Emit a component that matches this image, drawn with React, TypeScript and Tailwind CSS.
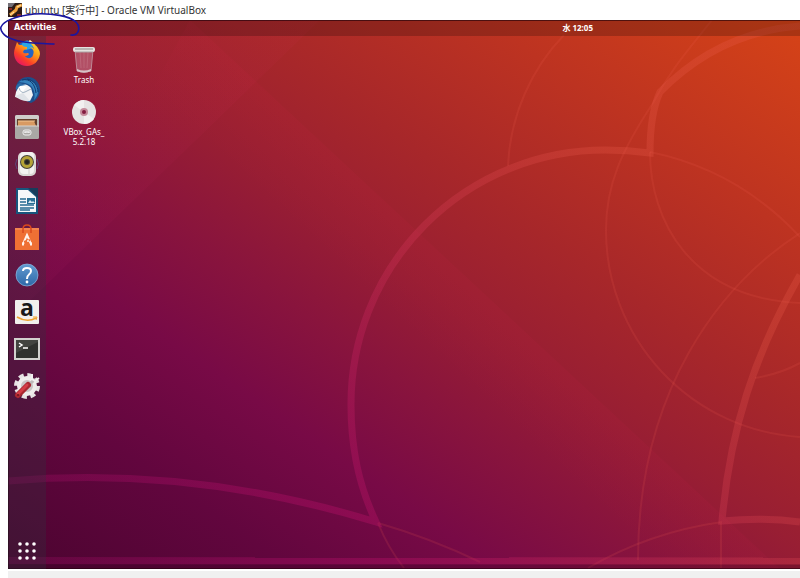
import type { ReactNode } from "react";

function Wallpaper() {
  return (
    <svg
      className="absolute inset-0 h-full w-full"
      viewBox="8 20 792 549"
      preserveAspectRatio="none"
      fill="none"
      aria-hidden="true"
    >
      <defs>
        <linearGradient id="sky" x1="0" y1="1" x2="1" y2="0">
          <stop offset="0" stopColor="#4b0430" />
          <stop offset="0.18" stopColor="#62063e" />
          <stop offset="0.31" stopColor="#780a46" />
          <stop offset="0.42" stopColor="#89143d" />
          <stop offset="0.52" stopColor="#981e33" />
          <stop offset="0.64" stopColor="#a7272a" />
          <stop offset="0.8" stopColor="#bd3321" />
          <stop offset="1" stopColor="#d64317" />
        </linearGradient>
        <linearGradient id="ribbon" gradientUnits="userSpaceOnUse" x1="8" y1="569" x2="560" y2="100">
          <stop offset="0" stopColor="#c0107c" stopOpacity="0.18" />
          <stop offset="0.4" stopColor="#c0106c" stopOpacity="0.34" />
          <stop offset="1" stopColor="#e85848" stopOpacity="0.28" />
        </linearGradient>
        <linearGradient id="facetA" gradientUnits="userSpaceOnUse" x1="200" y1="155" x2="90" y2="30">
          <stop offset="0" stopColor="#ff3080" stopOpacity="0.04" />
          <stop offset="1" stopColor="#ff3080" stopOpacity="0.03" />
        </linearGradient>
        <linearGradient id="facetB" gradientUnits="userSpaceOnUse" x1="460" y1="260" x2="400" y2="325">
          <stop offset="0" stopColor="#ff2060" stopOpacity="0.05" />
          <stop offset="1" stopColor="#ff2060" stopOpacity="0" />
        </linearGradient>
      </defs>
      <rect x="8" y="20" width="792" height="549" fill="url(#sky)" />
      <path d="M8 20H320L46 285L8 322Z" fill="url(#facetA)" />
      <path d="M190 20L780 569H600L130 130Z" fill="url(#facetB)" />

      <g stroke="#f06050" strokeOpacity="0.15" strokeWidth="2">
        <path d="M564 35C532 68 510 115 508 166" />
        <path d="M712 20C690 48 670 70 653 103C622 150 606 184 606 230A207 207 0 0 0 800 437" />
        <path d="M650 152C650 220 690 298 800 303" />
        <path d="M650 152Q738 170 800 237" />
        <path d="M800 233C720 285 638 390 638 560" />
        <path d="M755 378Q780 374 800 363" />
        <path d="M722 522Q650 532 588 568M721 522V568" />
        <path d="M378 523Q388 548 404 568M378 523Q430 538 480 562" />
      </g>

      <g stroke="url(#ribbon)" strokeWidth="7">
        <path d="M8 481Q190 465 376 522C359 486 351 450 351 405A254 254 0 0 1 605 150Q628 150 650 153C650 125 653 107 660 92Q719 32 800 26" />
        <path d="M800 275C754 355 730 430 722 521Q765 517 800 522" />
        <path d="M8 560.5L800 561" />
      </g>
      <path d="M8 566.5H800" stroke="#30001c" strokeOpacity="0.25" strokeWidth="4" />
      <path d="M8.5 20V569M8 568.5H800M8 20.5H800" stroke="#20000c" strokeOpacity="0.6" />
    </svg>
  );
}

function Icon({ children }: { children: ReactNode }) {
  return (
    <svg className="h-[26px] w-[26px] overflow-visible" viewBox="0 0 26 26" fill="none" aria-hidden="true">
      {children}
    </svg>
  );
}

const Firefox = () => (
  <Icon>
    <defs>
      <linearGradient id="fox" x1="22" y1="2" x2="6" y2="24" gradientUnits="userSpaceOnUse">
        <stop stopColor="#ffe02e" />
        <stop offset="0.4" stopColor="#ff9a16" />
        <stop offset="0.75" stopColor="#fb3e29" />
        <stop offset="1" stopColor="#e91a5c" />
      </linearGradient>
    </defs>
    <circle cx="13" cy="12" r="11" fill="#2464c4" />
    <path d="M9 2Q13-1 17 2L19 8 12 10 7 6Z" fill="#28a7e8" />
    <path
      d="M15 0C18 1 20 3 21 5C24 7 26 11 26 14C25 21 20 26 13 26C5 26 0 20 0 13C0 9 2 6 3 2L5 5L8 5C9 6 10 7 13 7L13 9L10 10L9 12C10 14 12 13 14 13C16 14 14 16 11 16C13 19 18 19 19 15C21 10 18 9 16 7C18 7 19 8 20 9C19 5 16 4 15 0Z"
      fill="url(#fox)"
    />
    <path d="M16 0L14 3H19Z" fill="#fff4c0" />
  </Icon>
);

const Thunderbird = () => (
  <Icon>
    <path d="M2 10C3 3 9 0 14 0C21 0 26 6 26 13C26 19 22 24 17 26L3 20Z" fill="#1c4f8c" />
    <path d="M5 5C10 1 19 2 23 9C25 14 24 19 20 23C22 16 19 9 14 7C10 5 7 6 5 5Z" fill="#3583bd" />
    <path d="M8 3C16 1 21 7 22 16M13 2C20 3 24 9 24 15" stroke="#12386c" />
    <path d="M5 9C8 6 14 7 17 11L19 18L16 24L1 20L2 15Z" fill="#f1f2f4" />
    <path d="M1 19L9 16L16 24Q7 25 1 19Z" fill="#dfe3e8" />
    <path d="M4 12Q5 7 10 8L13 11Q10 11 9 16L6 16Z" fill="#fff" />
    <path d="M5 11Q7 17 11 15L17 12" stroke="#9fb0c0" />
    <path d="M2 13C1 10 3 7 6 6L12 8L6 9Z" fill="#2a6aa7" />
  </Icon>
);

const Files = () => (
  <Icon>
    <rect x="1" y="1" width="24" height="24" rx="2" fill="#b9b7b4" />
    <rect x="1" y="1" width="24" height="5" rx="2" fill="#cfcdca" />
    <rect x="3" y="5" width="20" height="7" fill="#63402c" />
    <path d="M4 7H20L22 12H4Z" fill="#d89a62" />
    <path d="M4 7H21" stroke="#f2c592" />
    <rect x="1" y="12" width="24" height="13" rx="2" fill="#aaa8a5" />
    <path d="M1 12H25" stroke="#d6d4d1" />
    <rect x="9" y="16" width="8" height="5" rx="2" stroke="#eee" />
    <path d="M11 19V18H15V19" stroke="#eee" strokeWidth="1.5" />
  </Icon>
);

const Rhythmbox = () => (
  <Icon>
    <path d="M3 8Q0 13 3 18M23 8Q26 13 23 18" stroke="#5361a0" strokeOpacity="0.6" />
    <rect x="4" y="1" width="18" height="24" rx="5" fill="#dad8d5" />
    <rect x="6" y="1" width="14" height="22" rx="4" fill="#f4f3f1" />
    <circle cx="13" cy="11" r="7" fill="#45433a" />
    <circle cx="13" cy="11" r="4.5" stroke="#b5a437" strokeWidth="3" />
    <circle cx="13" cy="11" r="2" fill="#23231f" />
    <path d="M15 18V23" stroke="#cfcdca" />
  </Icon>
);

const Writer = () => (
  <Icon>
    <path d="M2 0H16L24 8V26H2Z" fill="#17557d" />
    <path d="M4 2H14L22 9V24H4Z" fill="#f4f7f9" />
    <path d="M14 0H24V10Z" fill="#173c5b" />
    <path d="M6 11H12M6 14H12M6 17H20M6 20H20M6 22H16" stroke="#246b91" strokeWidth="1.5" />
    <rect x="13" y="10" width="8" height="6" fill="#286f95" />
    <path d="M14 15L16 12L18 14L19 13L21 15Z" fill="#d6e8f2" />
  </Icon>
);

const Software = () => (
  <Icon>
    <path d="M1 3H25V25H1Z" fill="#ef7034" />
    <path d="M1 3H25V5H1Z" fill="#f28450" />
    <path d="M9 8V4Q9 0 13 0Q17 0 17 4V8" stroke="#d9481c" strokeWidth="1.5" />
    <path d="M9 19L13 10L17 19" stroke="#fff3ec" strokeWidth="2" />
    <path d="M8 19H10M16 19H18" stroke="#fff3ec" strokeWidth="3" />
    <path d="M10 17L16 15" stroke="#ef7034" strokeWidth="2" />
    <circle cx="14" cy="16" r="1" fill="#fff3ec" />
  </Icon>
);

const Help = () => (
  <Icon>
    <defs>
      <linearGradient id="help" x1="0" y1="0" x2="0" y2="1">
        <stop stopColor="#629bd0" />
        <stop offset="1" stopColor="#2d68a8" />
      </linearGradient>
    </defs>
    <circle cx="13" cy="13" r="11" fill="url(#help)" stroke="#8db9e2" strokeOpacity="0.7" />
    <path d="M9 9Q9 6 13 6Q17 6 17 9Q17 11 15 12.5Q13 14 13 17" stroke="#fff" strokeWidth="2" />
    <circle cx="13" cy="20" r="1.4" fill="#fff" />
  </Icon>
);

const Amazon = () => (
  <Icon>
    <rect x="1" y="1" width="24" height="24" rx="1" fill="#f1efed" />
    <text x="13" y="17" textAnchor="middle" fill="#191919" className="font-['Open_Sans',sans-serif] text-[23px] font-bold">
      a
    </text>
    <path d="M3 18Q13 24 22 19" stroke="#eca231" strokeWidth="1.5" />
    <path d="M19 18H23L22 21" stroke="#eca231" />
  </Icon>
);

const Terminal = () => (
  <Icon>
    <rect x="0" y="2" width="26" height="22" fill="#d2d2cf" />
    <rect x="2" y="4" width="22" height="18" fill="#2f312e" />
    <path d="M2 4H24V6L2 17Z" fill="#424440" />
    <path d="M5 7L8 9L5 11M9 12H14" stroke="#fff" strokeWidth="1.5" />
  </Icon>
);

const Settings = () => (
  <Icon>
    <circle cx="13" cy="13" r="11" stroke="#e6e3e3" strokeWidth="4" strokeDasharray="5 3.64" />
    <circle cx="13" cy="13" r="8" fill="#c9c4c5" stroke="#efedec" strokeWidth="4" />
    <path d="M15 12L21 6" stroke="#bdb9ba" strokeWidth="3" />
    <path d="M18 1L18 6L21 8L25 5" stroke="#f2f0f0" strokeWidth="2" />
    <path d="M4 22L14 12" stroke="#a92730" strokeWidth="6" strokeLinecap="round" />
    <path d="M4 21L13 12" stroke="#d43c45" strokeWidth="3" strokeLinecap="round" />
    <circle cx="4" cy="22" r="1" fill="#671018" />
  </Icon>
);

const DOCK_APPS = [
  { name: "Firefox", icon: Firefox },
  { name: "Thunderbird Mail", icon: Thunderbird },
  { name: "Files", icon: Files },
  { name: "Rhythmbox", icon: Rhythmbox },
  { name: "LibreOffice Writer", icon: Writer },
  { name: "Ubuntu Software", icon: Software },
  { name: "Help", icon: Help },
  { name: "Amazon", icon: Amazon },
  { name: "Terminal", icon: Terminal },
  { name: "Settings", icon: Settings },
];

const DOTS = [5, 12, 19];

function Dock() {
  return (
    <nav aria-label="Dock" className="flex w-[38px] flex-col items-center gap-[11px] bg-[#303440]/30 pt-1 pb-[5px]">
      {DOCK_APPS.map(({ name, icon: AppIcon }) => (
        <button key={name} aria-label={name} className="shrink-0">
          <AppIcon />
        </button>
      ))}
      <button aria-label="Show Applications" className="mt-auto">
        <svg className="h-6 w-6" viewBox="0 0 24 24" fill="#fff" aria-hidden="true">
          {DOTS.map((y) => DOTS.map((x) => <circle key={`${x}-${y}`} cx={x} cy={y - 1} r="1.8" />))}
        </svg>
      </button>
    </nav>
  );
}

function DesktopIcons() {
  return (
    <div className="flex w-[76px] flex-col items-center gap-[14px] pt-2 text-[8px] leading-[10px] text-white">
      <button className="flex flex-col items-center">
        <svg className="h-[31px] w-6" viewBox="0 0 24 31" fill="none" aria-hidden="true">
          <path d="M3 6L5 27Q12 30 19 27L21 6Z" fill="#d89bac" fillOpacity="0.4" stroke="#bd8794" />
          <path d="M8 8L9 24M12 8V24M16 8L15 24" stroke="#dca0ad" strokeOpacity="0.25" />
          <path d="M5 25Q12 28 19 25V27Q12 30 5 27Z" fill="#d6c1c5" />
          <rect x="1" y="3" width="22" height="5" rx="2" fill="#e5e2df" />
          <path d="M3 5H21" stroke="#8d8784" />
          <path d="M3 8H21" stroke="#aaa3a3" />
        </svg>
        Trash
      </button>
      <button className="flex flex-col items-center">
        <svg className="mb-[2px] h-[26px] w-[26px]" viewBox="0 0 26 26" aria-hidden="true">
          <circle cx="13" cy="13" r="12" fill="#e6e3e3" />
          <path d="M13 13L3 6Q7 1 13 1ZM13 13L23 20Q19 25 13 25Z" fill="#f2f0f0" />
          <circle cx="13" cy="13" r="4" fill="#c68b9b" />
          <circle cx="13" cy="13" r="2" fill="#831c40" />
        </svg>
        <span>
          VBox_GAs_
          <br />
          5.2.18
        </span>
      </button>
    </div>
  );
}

export default function App() {
  return (
    <div className="relative flex min-h-screen flex-col bg-white font-['Noto_Sans','Noto_Sans_CJK_JP',sans-serif]">
      <header className="flex h-5 items-center gap-[3px] pl-2">
        <svg className="h-[14px] w-[14px]" viewBox="0 0 14 14" fill="none" aria-hidden="true">
          <rect width="14" height="14" fill="#2c1b17" />
          <path d="M0 0H7L4 4H0Z" fill="#747078" />
          <path d="M14 2L9 4L8 7L2 12" stroke="#efa13c" strokeWidth="3" />
          <path d="M13 2L9 4M6 9L2 12" stroke="#ffe9b0" />
          <path d="M1 6H4M9 12H13" stroke="#8b2822" strokeWidth="2" />
        </svg>
        <h1 className="text-[10px] leading-5 whitespace-nowrap text-[#333]">
          ubuntu [実行中] - Oracle VM VirtualBox
        </h1>
      </header>

      <main className="relative ml-2 flex flex-1 flex-col">
        <Wallpaper />
        <div className="relative flex h-4 items-center bg-black/20 text-[8px] leading-4 font-bold text-white">
          <div className="flex w-[70%] pl-[6px]">
            <button className="font-['DejaVu_Sans',sans-serif] font-bold tracking-normal">Activities</button>
          </div>
          <button>水 12:05</button>
        </div>
        <div className="relative flex flex-1">
          <Dock />
          <DesktopIcons />
        </div>
      </main>

      <footer className="ml-2 h-[9px] border-t-2 border-white bg-[#f0f0f0]" />

      {/* pen mark around the Activities button */}
      <svg
        className="pointer-events-none absolute top-0 left-0 h-12 w-20"
        viewBox="0 0 80 48"
        fill="none"
        stroke="#1a16a0"
        strokeWidth="1.6"
        strokeLinecap="round"
        aria-hidden="true"
      >
        <path d="M54 44C40 43 24 44 12 39C3 36 0 30 1 27C4 20 18 16 34 14C52 13 70 16 76 22C81 27 79 36 71 35" />
      </svg>
    </div>
  );
}
